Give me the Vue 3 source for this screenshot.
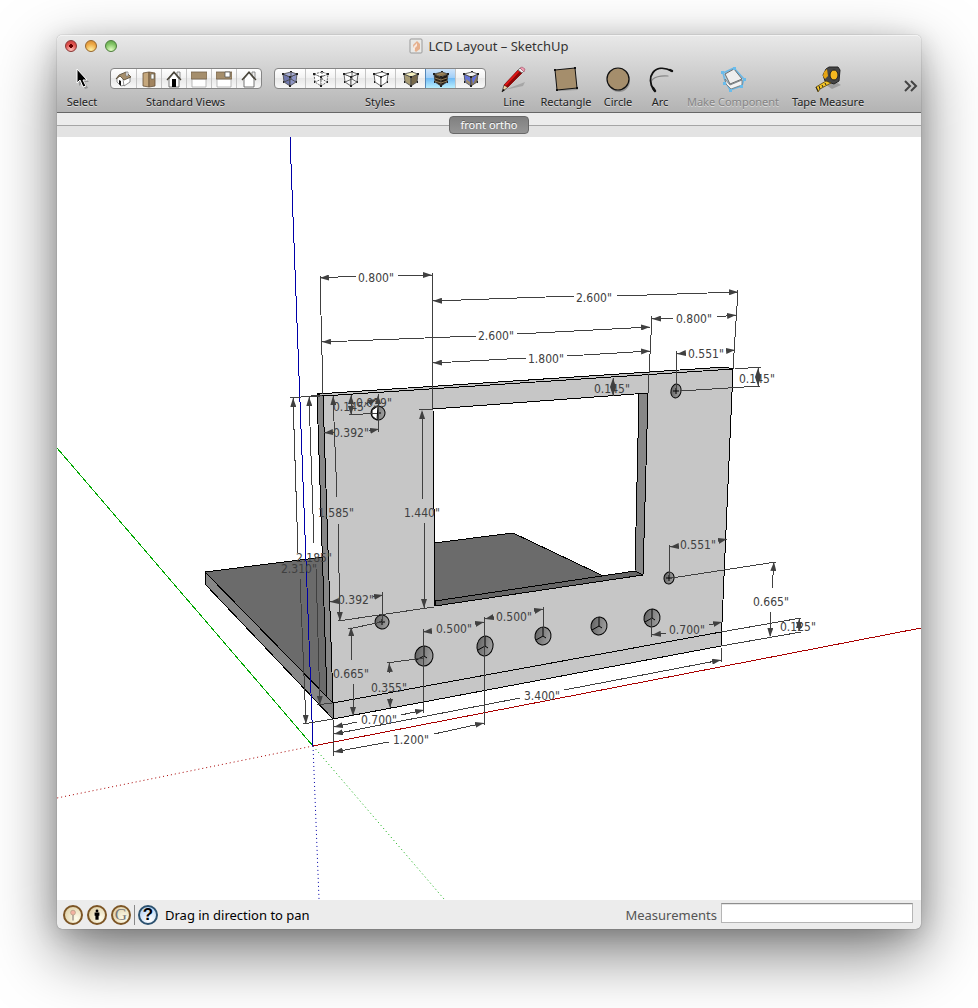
<script setup>
    import {ref} from 'vue';

    const activeStyle = ref('Shaded With Textures');
    const activeView = ref('');
    const measurement = ref('');

    const views = ['Iso', 'Top', 'Front', 'Right', 'Back', 'Left'];

    const cubeStyles = [
        {name: 'X-Ray', left: '#7078ad', right: '#8d94c4', top: '#a4aad2', inner: true},
        {name: 'Back Edges', left: '#fff', right: '#f4f4f4', top: '#fff', dashed: true, inner: true},
        {name: 'Wireframe', left: '#fafafa', right: '#f4f4f4', top: '#fafafa', inner: true},
        {name: 'Hidden Line', left: '#fff', right: '#fff', top: '#fff'},
        {name: 'Shaded', left: '#a89c74', right: '#77694a', top: '#f5f0c0'},
        {name: 'Shaded With Textures', left: '#33281b', right: '#221a12', top: '#8f7850', textured: true},
        {name: 'Monochrome', left: '#6675d8', right: '#8b7b5c', top: '#f2f2f2', mono: true}
    ];

    const tools = ['Line', 'Rectangle', 'Circle', 'Arc', 'Make Component', 'Tape Measure'];

    // x, y of the text start
    const labels = [
        ['0.800"', 358, 282], ['2.600"', 576, 302], ['0.800"', 676, 323],
        ['2.600"', 478, 340], ['1.800"', 528, 363], ['0.551"', 688, 358],
        ['0.145"', 739, 383], ['0.145"', 594, 393], ['0.145"', 333, 411],
        ['0.039"', 356, 407], ['0.392"', 333, 437], ['1.585"', 318, 517],
        ['1.440"', 404, 517], ['2.185"', 296, 562], ['2.310"', 281, 573],
        ['0.392"', 338, 604], ['0.500"', 436, 633], ['0.500"', 496, 621],
        ['0.551"', 680, 549], ['0.665"', 753, 606], ['0.125"', 780, 631],
        ['0.700"', 669, 634], ['0.665"', 333, 678], ['0.355"', 371, 692],
        ['0.700"', 361, 724], ['1.200"', 393, 744], ['3.400"', 524, 700]
    ];

    // tail x, y, tip x, y
    const arrows = [
        [356, 276, 320, 278], [398, 275, 432, 275],
        [574, 296, 433, 301], [617, 296, 738, 292],
        [673, 318, 652, 319], [717, 317, 736, 315],
        [476, 336, 322, 342], [517, 334, 650, 327],
        [526, 358, 433, 363], [567, 356, 650, 351],
        [686, 353, 677, 354], [726, 351, 735, 350],
        [758, 378, 758, 368], [758, 376, 758, 386],
        [613, 388, 613, 378], [613, 386, 613, 396],
        [351, 406, 351, 395], [351, 404, 351, 415],
        [378, 406, 378, 395], [366, 404, 377, 399],
        [334, 432, 324, 433], [369, 431, 379, 429],
        [337, 497, 333, 396], [338, 523, 340, 621],
        [423, 499, 422, 410], [424, 523, 424, 608],
        [314, 543, 309, 397], [316, 568, 320, 705],
        [298, 553, 293, 398], [300, 579, 306, 724],
        [340, 601, 330, 602], [373, 597, 383, 595],
        [432, 631, 423, 632], [475, 624, 484, 622],
        [494, 617, 485, 619], [534, 611, 543, 609],
        [679, 546, 670, 547], [718, 541, 727, 539],
        [772, 588, 774, 562], [771, 612, 770, 637],
        [799, 627, 799, 619], [799, 623, 799, 631],
        [666, 633, 652, 635], [709, 625, 722, 622],
        [352, 660, 351, 627], [353, 684, 353, 716],
        [390, 673, 389, 663], [390, 698, 390, 708],
        [357, 722, 334, 727], [401, 715, 424, 710],
        [389, 742, 334, 752], [434, 734, 484, 723],
        [520, 698, 334, 734], [564, 690, 721, 660]
    ];

    const extensions = [
        [320, 275, 323, 394], [432, 273, 433, 409], [738, 290, 733, 369],
        [652, 316, 648, 393], [677, 351, 676, 391], [735, 369, 761, 367],
        [680, 391, 760, 386], [349, 415, 377, 413], [378, 394, 378, 432],
        [338, 621, 434, 607], [419, 410, 433, 409], [308, 397, 320, 396],
        [317, 705, 332, 703], [290, 398, 322, 395], [303, 724, 333, 719],
        [382, 592, 382, 622], [423, 629, 423, 713], [484, 617, 484, 725],
        [543, 607, 543, 636], [670, 545, 669, 578], [672, 578, 776, 562],
        [721, 632, 801, 618], [721, 646, 801, 632], [651, 618, 651, 637],
        [348, 629, 382, 622], [387, 663, 423, 658], [333, 719, 334, 756],
        [721, 648, 721, 662]
    ];

    const holes = [
        [424, 656, 9, 10], [485, 646, 8, 10], [543, 636, 8, 9],
        [599, 626, 8, 9], [652, 618, 8, 9], [382, 622, 7, 7],
        [669, 578, 5, 6], [676, 391, 5, 7], [378, 413, 7, 7]
    ];
</script>

<template>
    <main class="window">
        <header class="toolbar">
            <div class="titlebar">
                <div class="lights">
                    <button class="light close" aria-label="Close"></button>
                    <button class="light minimize" aria-label="Minimize"></button>
                    <button class="light maximize" aria-label="Zoom"></button>
                </div>
                <h1 class="title">
                    <svg width="14" height="16" viewBox="0 0 14 16">
                        <rect x="1" y="1" width="12" height="14" rx="1" fill="#e9e9e7" stroke="#999" />
                        <path d="M4 7l4-4 3 3v5l-4 3-2-2z" fill="#e6b08d" />
                        <path d="M5 8l3-3v3l-2 2v3l-2-2z" fill="#fff" opacity=".7" />
                    </svg>
                    LCD Layout – SketchUp
                </h1>
            </div>

            <nav class="tools">
                <button class="tool">
                    <svg class="tool_icon" viewBox="0 0 28 28">
                        <path d="M10 6v13l3-3 3 6 3-1-3-6h4z" fill="#000" opacity=".25" transform="translate(1 2)" />
                        <path d="M9 4v14l3-3 3 7 3-1-3-6h4z" fill="#000" stroke="#fff" />
                    </svg>
                    <span>Select</span>
                </button>

                <div class="tool">
                    <div class="segments">
                        <button v-for="view in views" :key="view" class="segment view" :aria-label="view" @click="activeView = view">
                            <svg width="16" height="18" viewBox="0 0 16 18">
                                <g v-if="view === 'Iso'">
                                    <path d="M2 8l5-4 3 5v6l-4 1-4-4z" fill="#fff" stroke="#666" stroke-width=".7" />
                                    <path d="M8 9l7-2v5l-6 4z" fill="#fff" stroke="#666" stroke-width=".7" />
                                    <path d="M4 5l7-3 5 5-7 3-4-4-4 3z" fill="#a58e6c" stroke="#534733" stroke-width=".8" />
                                    <path d="M4 10l2 1v5l-2-2z" fill="#111" />
                                    <path d="M11 2h2v4h-2z" fill="#fff" stroke="#777" stroke-width=".7" />
                                </g>
                                <g v-else-if="view === 'Top'">
                                    <path d="M2 3l6-1v15l-6-1z" fill="#c5a77c" stroke="#685238" stroke-width=".8" />
                                    <path d="M8 2l6 1v13l-6 1z" fill="#a18460" stroke="#685238" stroke-width=".8" />
                                    <path d="M10 4h3v5h-3z" fill="#fff" stroke="#665" stroke-width=".7" />
                                </g>
                                <g v-else-if="view === 'Right' || view === 'Back'">
                                    <path d="M1 9h14v8H1z" fill="#fff" stroke="#aaa" stroke-width=".8" />
                                    <path d="M0 2h16v7H0z" fill="#a58e6c" stroke="#74634b" stroke-width=".8" />
                                    <path v-if="view === 'Back'" d="M9 2h5v5H9z" fill="#fff" stroke="#555" stroke-width=".8" />
                                </g>
                                <g v-else>
                                    <path d="M11 2h3v6h-3z" fill="#eee" stroke="#777" stroke-width=".8" />
                                    <path d="M3 9l5-6 5 6v8H3z" fill="#fff" stroke="#555" stroke-width=".8" />
                                    <path d="M1 10l7-8 7 8" fill="none" stroke="#454034" stroke-width="1.3" />
                                    <path v-if="view === 'Front'" d="M6 9h4v8H6z" fill="#000" />
                                </g>
                            </svg>
                        </button>
                    </div>
                    <span>Standard Views</span>
                </div>

                <div class="tool">
                    <div class="segments">
                        <button
                            v-for="cube in cubeStyles"
                            :key="cube.name"
                            class="segment cube"
                            :class="{active: activeStyle === cube.name}"
                            :aria-label="cube.name"
                            @click="activeStyle = cube.name"
                        >
                            <svg width="18" height="18" viewBox="0 0 18 18">
                                <g stroke="#444" stroke-width=".8" stroke-linejoin="round" :stroke-dasharray="cube.dashed ? '2 1' : null">
                                    <path d="M2 4l7 3v9l-6-4z" :fill="cube.left" />
                                    <path d="M9 7l7-3-1 8-6 4z" :fill="cube.right" />
                                    <path d="M2 4l8-2 6 2-7 3z" :fill="cube.top" />
                                    <path v-if="cube.inner" d="M10 2v7l5 3M10 9l-7 3" fill="none" />
                                </g>
                                <path v-if="cube.textured" d="M3 8l6 2 6-2M3 11l6 2 6-2M5 5l6-2" fill="none" stroke="#a88f66" stroke-width=".8" />
                                <g v-if="cube.mono">
                                    <path d="M4 9l4 3v3l-4-3z" fill="#a08f6d" />
                                    <path d="M10 8l5-3-4 9z" fill="#5d70e6" />
                                </g>
                                <path d="M1 3h2v2H1zM9 1h2v1H9zM15 3h2v2h-2zM8 6h2v2H8zM8 15h2v2H8zM2 11h1v2H2zM15 11h1v2h-1z" fill="#222" />
                            </svg>
                        </button>
                    </div>
                    <span>Styles</span>
                </div>

                <button v-for="tool in tools" :key="tool" class="tool" :disabled="tool === 'Make Component'">
                    <svg class="tool_icon" viewBox="0 0 28 28">
                        <g v-if="tool === 'Line'">
                            <path d="M4 25L25 17l-2 4z" fill="#000" opacity=".16" />
                            <path d="M4 20l4 2-6 5z" fill="#f0d6a6" stroke="#333" stroke-width=".7" />
                            <path d="M2 27l1-3 2 1z" fill="#000" />
                            <path d="M4 20L18 5l4 3L8 22z" fill="#e01414" stroke="#700" stroke-width=".7" />
                            <path d="M6 21L20 6l2 2L8 22z" fill="#8e0808" />
                            <path d="M18 5l2-2 4 3-2 2z" fill="#eee" stroke="#555" stroke-width=".7" />
                            <path d="M20 3l2-1 3 2-1 3z" fill="#f09bb1" stroke="#a75f71" stroke-width=".7" />
                        </g>
                        <g v-else-if="tool === 'Rectangle'">
                            <path d="M5 24l20-1 1 2-19 1z" fill="#000" opacity=".2" />
                            <path d="M3 5l20-2 2 20-20 2z" fill="#a58e6c" stroke="#111" />
                            <path d="M2 4h2v2H2zM22 2h2v2h-2zM24 22h2v2h-2zM4 24h2v2H4z" fill="#111" />
                        </g>
                        <g v-else-if="tool === 'Circle'">
                            <circle cx="15" cy="16" r="11" fill="#000" opacity=".25" />
                            <circle cx="14" cy="14" r="11" fill="#a58e6c" stroke="#111" stroke-width="1.2" />
                        </g>
                        <g v-else-if="tool === 'Arc'" fill="none" stroke-linecap="round">
                            <path d="M7 23C1 17 7 10 22 11" stroke="#888" stroke-width="1.2" />
                            <path d="M8 25C-1 13 8-3 26 6" stroke="#111" stroke-width="1.8" />
                            <path d="M7 23l2 3M24 5l2 1" stroke="#111" stroke-width="2.5" />
                        </g>
                        <g v-else-if="tool === 'Make Component'" stroke-linejoin="round">
                            <path d="M4 8l11-5 10 11-2 7-12 4-5-9z" fill="#a9ccdf" stroke="#6cb8e6" stroke-width="1.5" />
                            <path d="M6 14l5 6 12-5v5l-11 4-5-5z" fill="#f2f2f2" stroke="#707070" stroke-width=".8" />
                            <path d="M6 9l9-5 8 10-12 5z" fill="#eee" stroke="#6d6d6d" />
                            <path d="M2 6h3v3H2zM14 2h3v3h-3zM24 13h3v3h-3zM10 24h3v3h-3zM21 20h3v3h-3zM4 17h3v3H4z" fill="#69bcec" />
                        </g>
                        <g v-else>
                            <path d="M12 20l8-4 7 4-9 4z" fill="#000" opacity=".2" />
                            <path d="M12 4l3-2h9l2 3-1 11-5 3-9-3-2-6z" fill="#454545" stroke="#242424" />
                            <path d="M10 7l3-3 1 7-3 3-2-3z" fill="#e5a414" />
                            <ellipse cx="20" cy="10" rx="4" ry="5" fill="#f5b81f" stroke="#222" />
                            <path d="M12 16l5 2-11 6-2 3-2-5z" fill="#f6c728" stroke="#55420c" stroke-width=".8" />
                            <path d="M5 21l1 3M8 20l1 2M11 18l1 2M2 22l2 4" stroke="#222" />
                        </g>
                    </svg>
                    <span>{{tool}}</span>
                </button>

                <button class="more" aria-label="More tools">
                    <svg width="14" height="12" viewBox="0 0 14 12">
                        <path d="M1 1l5 5-5 5M7 1l5 5-5 5" fill="none" stroke="#444" stroke-width="2" />
                    </svg>
                </button>
            </nav>
        </header>

        <div class="scenes">
            <button class="scene">front ortho</button>
        </div>

        <svg class="viewport" viewBox="57 137 864 763">
            <defs>
                <marker id="tip" viewBox="0 0 9 6" refX="9" refY="3" markerWidth="9" markerHeight="6" markerUnits="userSpaceOnUse" orient="auto">
                    <path d="M0 0l9 3-9 3z" fill="#404040" stroke="none" />
                </marker>
                <linearGradient id="hole">
                    <stop offset="0" stop-color="#656565" />
                    <stop offset="1" stop-color="#a0a0a0" />
                </linearGradient>
            </defs>

            <g class="axis">
                <path class="green" d="M57 448L313 746" />
                <path class="green dotted" d="M313 746L444 899" />
                <path class="red" d="M313 746L921 628" />
                <path class="red dotted" d="M313 746L57 798" />
                <path class="blue dotted" d="M313 746L319 899" />
            </g>

            <g class="model">
                <path d="M205 572L513 533 721 632 333 703z" fill="#6b6b6b" />
                <path d="M205 572L333 703V719L205 584z" fill="#878787" />
                <path d="M317 394L323 396 333 703 327 697z" fill="#878787" />
                <path d="M317 394L725 367 733 369 323 396z" fill="#c6c6c6" />
                <path d="M323 396L733 369 721 646 333 719V703zM433 409L435 606 643 575 648 393z" fill="#c6c6c6" fill-rule="evenodd" />
                <path d="M639 394L648 393 643 575 635 571z" fill="#878787" />
                <path d="M435 601L635 571 643 575 435 606z" fill="#666" />
                <path d="M333 703L721 632" fill="none" />
            </g>

            <g class="holes">
                <g v-for="([x, y, rx, ry], i) in holes" :key="i">
                    <ellipse :cx="x" :cy="y" :rx="rx" :ry="ry" :transform="`rotate(12 ${x} ${y})`" fill="url(#hole)" />
                    <path v-if="i < 5" :d="`M${x - rx + 1} ${y + 4}L${x} ${y}V${y - ry}M${x} ${y}l3 2`" />
                    <path v-else :d="`M${x - 3} ${y}h6M${x} ${y - 3}v6`" />
                </g>
                <path d="M378 406L372 410V416L377 420z" fill="#fff" />
            </g>

            <path class="axis blue" d="M290 137L313 746" />

            <g class="dimension">
                <line v-for="([x1, y1, x2, y2], i) in extensions" :key="i" :x1="x1" :y1="y1" :x2="x2" :y2="y2" />
                <line v-for="([x1, y1, x2, y2], i) in arrows" :key="i" :x1="x1" :y1="y1" :x2="x2" :y2="y2" marker-end="url(#tip)" />
            </g>
            <text v-for="([text, x, y], i) in labels" :key="i" class="measure" :x="x" :y="y">{{text}}</text>
        </svg>

        <footer class="status">
            <button class="badge" aria-label="Geo-location">
                <svg width="20" height="20" viewBox="0 0 20 20">
                    <path d="M10 10v7" stroke="#aaa096" stroke-width="2" />
                    <circle cx="10" cy="7" r="3" fill="#f3b2a2" stroke="#b79d86" />
                </svg>
            </button>
            <button class="badge" aria-label="Credits">
                <svg width="20" height="20" viewBox="0 0 20 20">
                    <circle cx="10" cy="5" r="1.8" />
                    <path d="M7 7h6v4h-1v5H8v-5H7z" />
                </svg>
            </button>
            <button class="badge letter">G</button>
            <span class="divider"></span>
            <button class="badge help">?</button>
            <p class="hint">Drag in direction to pan</p>
            <label class="measurements" for="measurements">Measurements</label>
            <input id="measurements" v-model="measurement" class="field" type="text">
        </footer>
    </main>
</template>

<style>
    body{
        margin: 0;
        background: white;
    }

    #app{
        padding: 35px 57px 79px;
    }
</style>

<style scoped>
    .window{
        border-radius: 5px;
        background: #ececec;
        box-shadow: 0 0 1px rgba(0, 0, 0, .6), 0 24px 64px rgba(0, 0, 0, .52), 0 5px 24px rgba(0, 0, 0, .16);
        font-family: 'Noto Sans', 'Open Sans', sans-serif;
        font-size: 12px;
        color: #222;
    }

    button{
        border: 0;
        padding: 0;
        background: none;
        font: inherit;
        color: inherit;
    }

    .toolbar{
        height: 77px;
        border-bottom: 1px solid #666;
        border-radius: 5px 5px 0 0;
        background: linear-gradient(#e9e9e9, #b3b3b3);
        box-shadow: inset 0 1px #f4f4f4;
    }

    .titlebar{
        display: grid;
        grid-template-columns: 80px 1fr 80px;
        align-items: center;
        height: 22px;
    }

    .lights{
        display: flex;
        gap: 8px;
        padding-left: 8px;
    }

    .light{
        width: 12px;
        height: 12px;
        border: 1px solid #8a3634;
        border-radius: 50%;
    }

    .close{
        background: radial-gradient(circle, #600 2px, transparent 2px), radial-gradient(circle at 50% 90%, #ffc4bd, #e0524e 60%, #c54040);
    }

    .minimize{
        border-color: #96652b;
        background: radial-gradient(circle at 50% 90%, #fff3a5, #eda845 60%, #d18732);
    }

    .maximize{
        border-color: #4c7c3b;
        background: radial-gradient(circle at 50% 90%, #e3ffc4, #82c465 60%, #5a9e45);
    }

    .title{
        display: flex;
        justify-content: center;
        align-items: center;
        gap: 5px;
        margin: 0;
        font-size: 13px;
        font-weight: 400;
        color: #333;
    }

    .tools{
        display: grid;
        grid-template-columns: 50px 157px 232px 36px 68px 36px 48px 98px 92px 1fr;
        padding-top: 8px;
    }

    .tool{
        display: flex;
        flex-direction: column;
        align-items: center;
        justify-content: space-between;
        height: 45px;
        line-height: 16px;
        white-space: nowrap;
        font-size: 11px;
        text-shadow: 0 1px rgba(255, 255, 255, .5);
    }

    .tool:disabled{
        color: #858585;
    }

    .tool_icon{
        width: 28px;
        height: 28px;
    }

    .segments{
        display: flex;
        overflow: hidden;
        height: 21px;
        margin-top: 3px;
        border: 1px solid #858585;
        border-radius: 4px;
        background: linear-gradient(#fff, #f1f1f1 50%, #e8e8e8 50%, #f8f8f8);
        box-sizing: border-box;
    }

    .segment{
        display: flex;
        align-items: center;
        justify-content: center;
        width: 25px;
        box-sizing: border-box;
    }

    .segment + .segment{
        border-left: 1px solid #c4c4c4;
    }

    .cube{
        width: 30px;
    }

    .segment.active{
        border-left-color: #5487b9;
        background: linear-gradient(#cfe4fa, #9ccdf8 50%, #72bbf5 50%, #baf0ff);
    }

    .more{
        display: flex;
        justify-content: flex-end;
        align-items: center;
        padding: 0 3px 4px 0;
    }

    .scenes{
        display: flex;
        justify-content: center;
        align-items: center;
        height: 24px;
        background: linear-gradient(#ececec 12px, #a5a5a5 12px, #a5a5a5 13px, #e3e3e3 13px);
    }

    .scene{
        height: 18px;
        padding: 0 10px;
        border: 1px solid #686868;
        border-radius: 4px;
        background: linear-gradient(#808080, #959595);
        font-size: 11px;
        line-height: 16px;
        color: white;
        text-shadow: 0 -1px rgba(0, 0, 0, .3);
        box-sizing: border-box;
    }

    .viewport{
        display: block;
        width: 100%;
        background: white;
    }

    .axis, .dimension, .model{
        shape-rendering: crispEdges;
    }

    .axis, .dimension{
        fill: none;
    }

    .green{
        stroke: #00a800;
    }

    .red{
        stroke: #a80000;
    }

    .blue{
        stroke: #0000a8;
    }

    .dotted{
        stroke-dasharray: 1 3;
        shape-rendering: geometricPrecision;
    }

    .model, .holes{
        stroke: black;
        stroke-linejoin: round;
    }

    .holes path{
        fill: none;
    }

    .holes > path{
        fill: white;
    }

    .dimension{
        stroke: #404040;
    }

    .measure{
        font-family: 'DejaVu Sans Condensed', 'DejaVu Sans', sans-serif;
        font-size: 12px;
        fill: #404040;
    }

    .status{
        display: flex;
        align-items: center;
        gap: 4px;
        height: 29px;
        padding: 0 8px 0 6px;
        font-size: 13px;
        color: black;
    }

    .badge{
        display: flex;
        align-items: center;
        justify-content: center;
        width: 20px;
        height: 20px;
        border: 2px solid #7c5525;
        border-radius: 50%;
        background: radial-gradient(circle at 70% 70%, #fffdec, #d9c89b);
        box-sizing: border-box;
        flex: none;
    }

    .letter{
        font-family: 'Liberation Serif', serif;
        font-size: 17px;
        color: #777;
    }

    .divider{
        width: 1px;
        height: 20px;
        margin: 0 -1px;
        background: #888;
    }

    .help{
        border-color: #2b516f;
        background: radial-gradient(circle at 60% 80%, #fff, #a9c9ef);
        font-family: 'Liberation Sans', sans-serif;
        font-size: 17px;
        font-weight: 700;
    }

    .hint{
        flex: 1;
        margin: 0 0 0 3px;
    }

    .measurements{
        color: #555;
    }

    .field{
        width: 192px;
        height: 20px;
        margin-bottom: 4px;
        border: 1px solid #b5b5b5;
        border-top-color: #8e8e8e;
        background: white;
        box-shadow: inset 0 1px #e5e5e5;
        box-sizing: border-box;
        font: inherit;
    }
</style>
